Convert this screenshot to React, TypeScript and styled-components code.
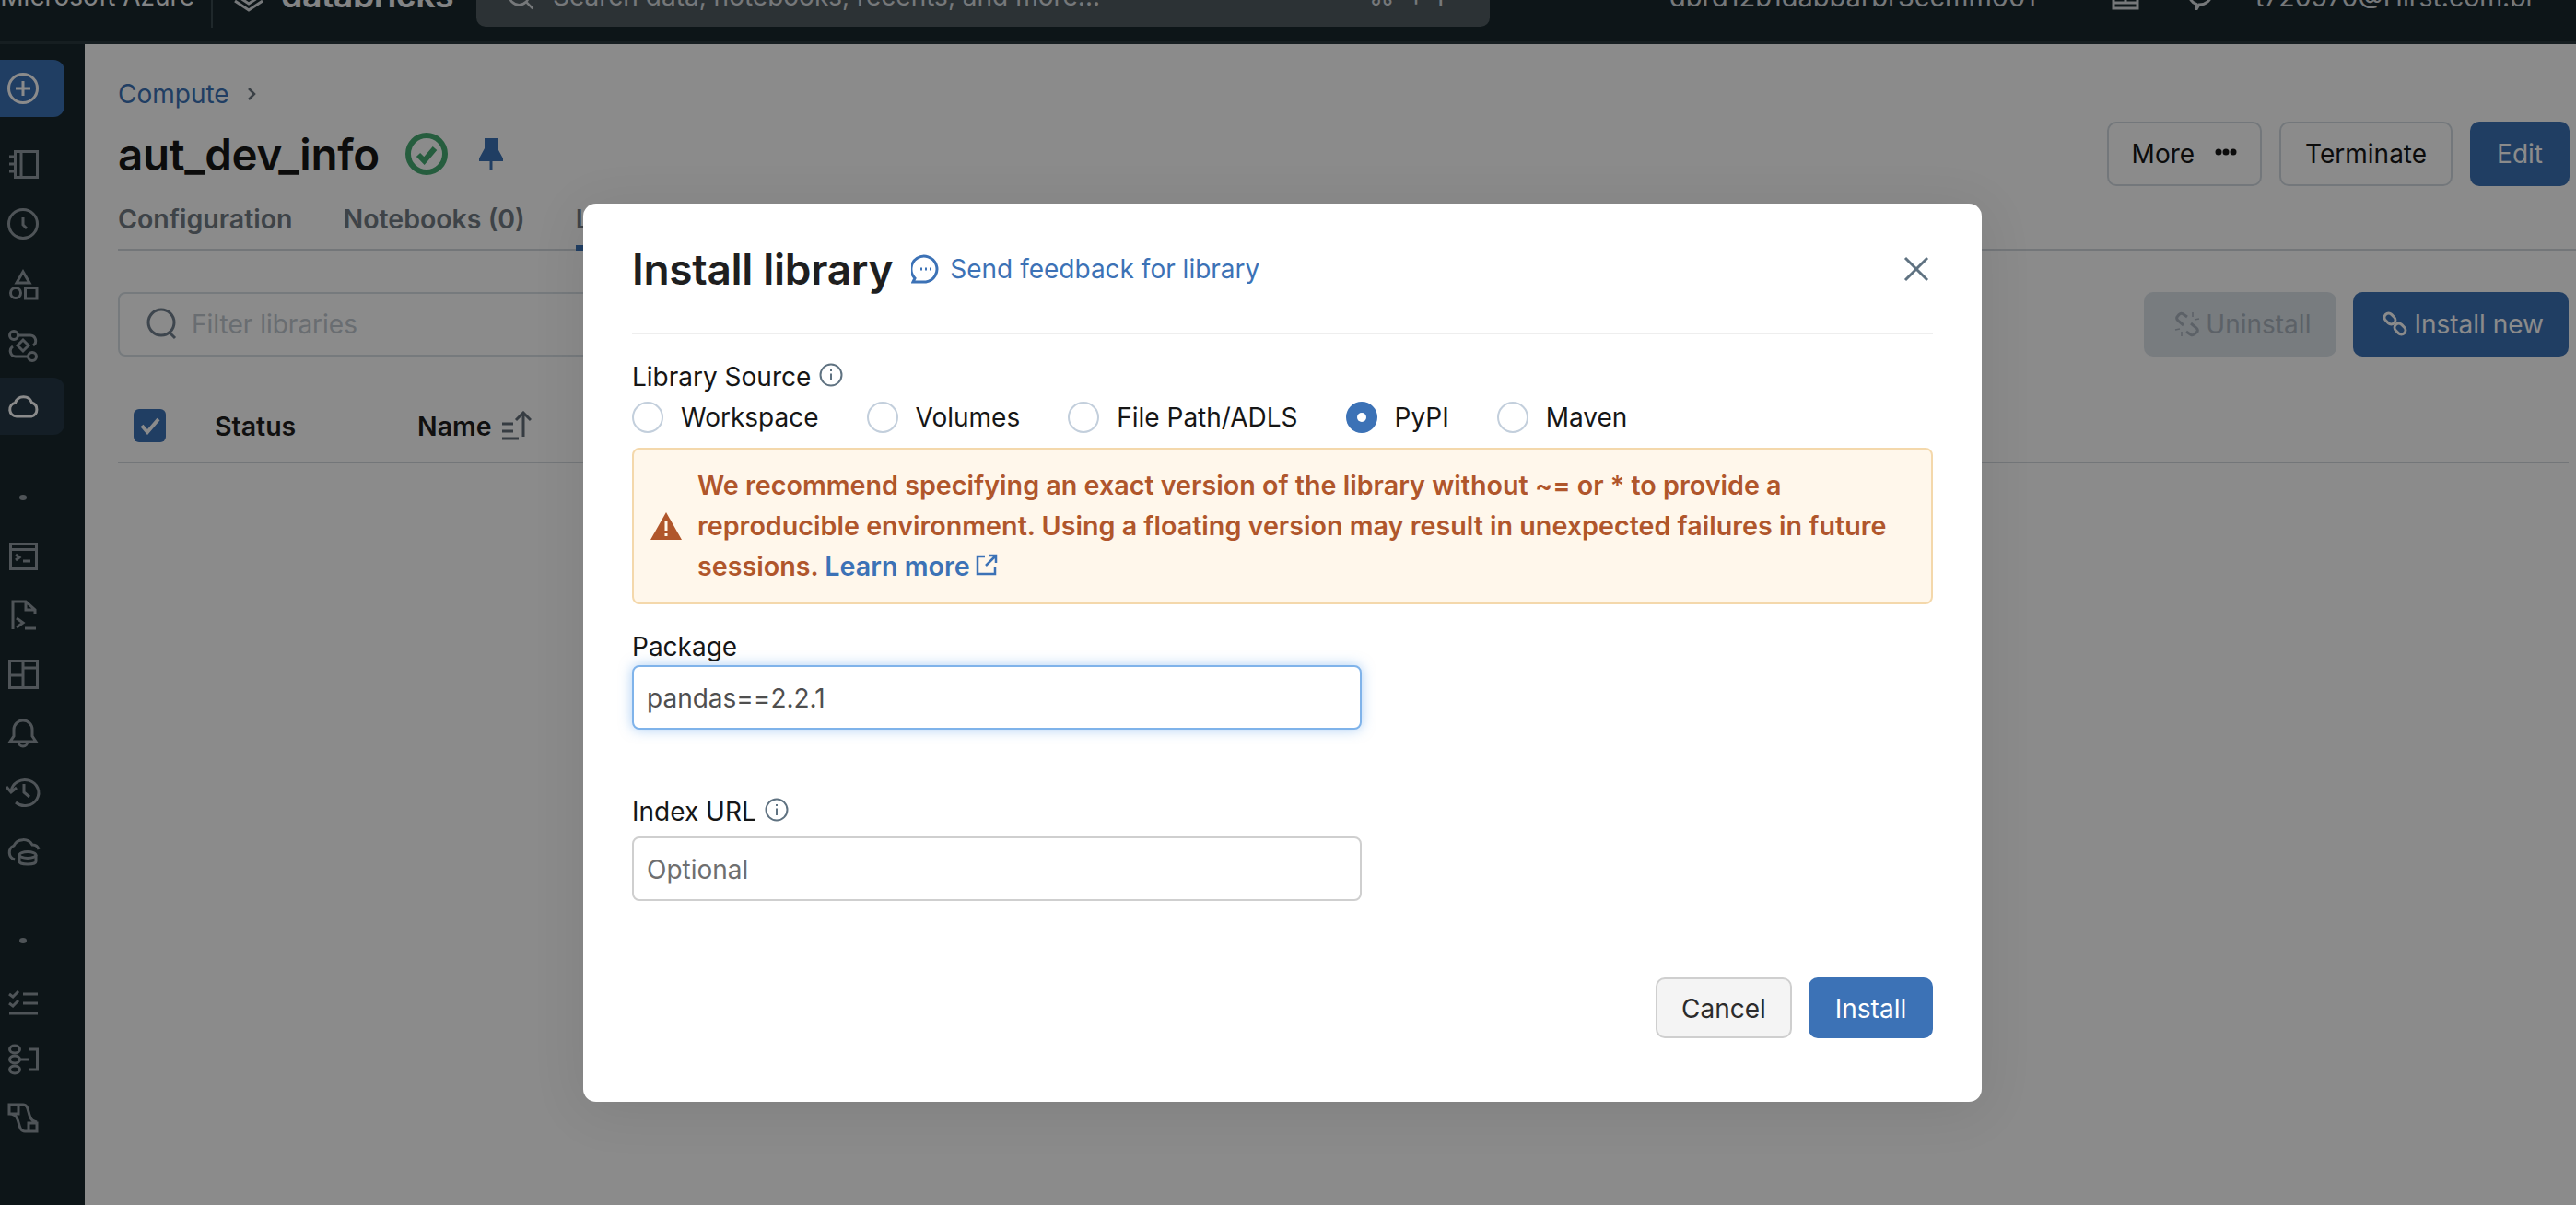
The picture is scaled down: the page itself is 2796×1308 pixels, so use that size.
import React from "react";
import styled, { createGlobalStyle } from "styled-components";

const Global = createGlobalStyle`
  html, body { margin: 0; padding: 0; background: #fff; }
  body { font-family: Inter, "Noto Sans", "Liberation Sans", sans-serif; font-size: 28px; color: #161616; }
  * { box-sizing: border-box; }
`;

const Page = styled.div`
  position: relative;
  width: 2796px;
  height: 1308px;
  overflow: hidden;
  display: flex;
  flex-direction: column;
`;

const TopBar = styled.header`
  height: 48px;
  flex: none;
  background: #18282d;
  border-bottom: 3px solid #2a383d;
  overflow: hidden;
  display: flex;
  align-items: flex-end;
  padding-bottom: 16px;
`;

const TopRow = styled.div`
  height: 58px;
  flex: none;
  width: 2796px;
  display: flex;
  align-items: center;
  color: #f0f2f4;
  white-space: nowrap;
`;

const AzureLabel = styled.div`
  width: 211px;
  flex: none;
  display: flex;
  justify-content: flex-end;
  font-size: 28px;
  padding-bottom: 8px;
`;

const TopDivider = styled.div`
  width: 2px;
  height: 60px;
  margin: 0 22px 0 18px;
  background: #3a4a50;
  flex: none;
`;

const LogoMark = styled.svg`
  width: 34px;
  height: 34px;
  flex: none;
  fill: none;
  stroke: #d8dde0;
  stroke-width: 3;
  margin-bottom: 8px;
`;

const LogoWord = styled.div`
  font-size: 37.5px;
  font-weight: 600;
  letter-spacing: -0.5px;
  margin-left: 18px;
  width: 212px;
  flex: none;
  padding-bottom: 12px;
`;

const TopSearch = styled.div`
  width: 1100px;
  height: 58px;
  flex: none;
  background: #525d62;
  border-radius: 0 0 10px 10px;
  display: flex;
  align-items: center;
  padding: 0 36px 8px 33px;
  gap: 20px;
  color: #d8dde0;
  font-size: 28px;
`;

const TopSearchIcon = styled.svg`
  width: 30px;
  height: 30px;
  flex: none;
  fill: none;
  stroke: #d8dde0;
  stroke-width: 3;
`;

const Shortcut = styled.span`
  margin-left: auto;
  letter-spacing: 3px;
`;

const Workspace = styled.div`
  margin-left: 195px;
  width: 480px;
  flex: none;
  font-size: 29px;
  padding-bottom: 8px;
  color: #d8dde0;
`;

const TopIcon = styled.svg<{ $right: number }>`
  width: 30px;
  height: 30px;
  flex: none;
  fill: none;
  stroke: #d8dde0;
  stroke-width: 3;
  margin-right: ${(p) => p.$right}px;
  margin-bottom: 8px;
`;

const Email = styled.div`
  font-size: 28.4px;
  padding-bottom: 8px;
  color: #d8dde0;
`;

const Body = styled.div`
  flex: 1;
  display: flex;
  min-height: 0;
`;

const Sidebar = styled.nav`
  width: 92px;
  flex: none;
  background: #18282d;
  padding-top: 17px;
  display: flex;
  flex-direction: column;
`;

const NavGroup = styled.div<{ $gap: number; $top: number }>`
  display: flex;
  flex-direction: column;
  gap: ${(p) => p.$gap}px;
  margin-top: ${(p) => p.$top}px;
`;

const NavItem = styled.div<{ $bg?: string }>`
  width: 70px;
  height: 62px;
  padding-left: 8px;
  display: flex;
  align-items: center;
  border-radius: 0 12px 12px 0;
  background: ${(p) => p.$bg || "transparent"};
`;

const NavSvg = styled.svg<{ $bright?: boolean }>`
  width: 34px;
  height: 34px;
  fill: none;
  stroke: ${(p) => (p.$bright ? "#ffffff" : "#929ba1")};
  stroke-width: 3;
  overflow: visible;
`;

const NavDot = styled.div<{ $top: number }>`
  width: 8px;
  height: 6px;
  border-radius: 50%;
  background: #929ba1;
  margin: ${(p) => p.$top}px 0 0 21px;
`;

const Main = styled.main`
  flex: 1;
  min-width: 0;
  padding: 37px 0 0 36px;
  background: #fff;
`;

const Crumb = styled.div`
  height: 34px;
  display: flex;
  align-items: center;
  gap: 18px;
  color: #3c72b6;
  font-size: 28px;
`;

const CrumbChevron = styled.svg`
  width: 12px;
  height: 18px;
  fill: none;
  stroke: #6b7680;
  stroke-width: 2.5;
`;

const HeaderRow = styled.div`
  margin-top: 13px;
  height: 70px;
  padding-right: 7px;
  display: flex;
  align-items: center;
`;

const Title = styled.h1`
  margin: 0;
  font-size: 47.5px;
  font-weight: 600;
  letter-spacing: -0.3px;
  color: #161616;
`;

const StatusIcon = styled.svg`
  width: 46px;
  height: 46px;
  margin-left: 28px;
  flex: none;
`;

const PinIcon = styled.svg`
  width: 28px;
  height: 36px;
  margin-left: 33px;
  flex: none;
`;

const Actions = styled.div`
  margin-left: auto;
  display: flex;
  gap: 19px;
`;

const Btn = styled.div<{ $variant?: "primary" | "outline" | "disabled"; $pad?: string }>`
  height: 70px;
  display: flex;
  align-items: center;
  border-radius: 10px;
  padding: ${(p) => p.$pad || "0 28px"};
  font-size: 28px;
  white-space: nowrap;
  border: ${(p) => (p.$variant === "outline" ? "2px solid #d3dbe2" : "none")};
  background: ${(p) =>
    p.$variant === "primary" ? "#3c72b6" : p.$variant === "disabled" ? "#dce3ea" : "transparent"};
  color: ${(p) =>
    p.$variant === "primary" ? "#fff" : p.$variant === "disabled" ? "#a9b3bd" : "#161616"};
`;

const MoreDots = styled.svg`
  width: 24px;
  height: 10px;
  margin-left: 22px;
  margin-bottom: 4px;
  fill: #161616;
`;

const LinkIcon = styled.svg`
  width: 28px;
  height: 28px;
  margin-right: 6px;
  fill: none;
  stroke-width: 3;
  stroke: currentColor;
`;

const Tabs = styled.div`
  height: 70px;
  display: flex;
  gap: 55px;
  border-bottom: 2px solid #d4d8de;
`;

const Tab = styled.div<{ $active?: boolean }>`
  height: 70px;
  padding-top: 18px;
  line-height: 36px;
  font-size: 28.5px;
  font-weight: 600;
  color: #727c84;
  border-bottom: ${(p) => (p.$active ? "6px solid #3c72b6" : "none")};
`;

const Toolbar = styled.div`
  margin-top: 45px;
  padding-right: 8px;
  display: flex;
  justify-content: space-between;
`;

const Filter = styled.div`
  width: 1200px;
  height: 70px;
  border: 2px solid #d8e0e6;
  border-radius: 8px;
  display: flex;
  align-items: center;
  gap: 14px;
  padding-left: 28px;
  color: #c0c8cf;
  font-size: 28px;
`;

const FilterIcon = styled.svg`
  width: 36px;
  height: 36px;
  fill: none;
  stroke: #73808f;
  stroke-width: 3;
`;

const ToolbarRight = styled.div`
  display: flex;
  gap: 18px;
`;

const TableHead = styled.div`
  margin-top: 36px;
  margin-right: 8px;
  height: 80px;
  border-bottom: 2px solid #d4d8de;
  display: flex;
  align-items: center;
  padding-left: 17px;
  font-size: 28.5px;
  font-weight: 600;
`;

const CheckBox = styled.div`
  width: 35px;
  height: 36px;
  border-radius: 6px;
  background: #3c72b6;
  display: flex;
  align-items: center;
  justify-content: center;
  margin-right: 53px;
`;

const CheckSvg = styled.svg`
  width: 24px;
  height: 20px;
  fill: none;
  stroke: #fff;
  stroke-width: 4;
`;

const HeadCell = styled.div<{ $w?: number }>`
  width: ${(p) => (p.$w ? `${p.$w}px` : "auto")};
  display: flex;
  align-items: center;
  gap: 10px;
  color: #1f1f1f;
`;

const SortIcon = styled.svg`
  width: 33px;
  height: 32px;
  fill: none;
  stroke: #646f7a;
  stroke-width: 3;
`;

const Backdrop = styled.div`
  position: absolute;
  inset: 0;
  background: rgba(0, 0, 0, 0.455);
`;

const Dialog = styled.section`
  position: absolute;
  left: 633px;
  top: 221px;
  width: 1518px;
  height: 975px;
  background: #fff;
  border-radius: 14px;
  padding: 0 53px;
  box-shadow: 0 8px 60px rgba(0, 0, 0, 0.09);
  font-size: 28px;
  color: #161616;
`;

const DialogHead = styled.div`
  height: 142px;
  padding-top: 2px;
  border-bottom: 2px solid #eeeeee;
  display: flex;
  align-items: center;
`;

const DialogTitle = styled.h2`
  margin: 0;
  font-size: 46px;
  font-weight: 600;
  letter-spacing: -0.3px;
  color: #1f1f1f;
`;

const Feedback = styled.div`
  margin-left: 20px;
  display: flex;
  align-items: center;
  gap: 10px;
  color: #3c72b6;
  font-size: 28px;
`;

const BlueIcon = styled.svg`
  width: 32px;
  height: 32px;
  fill: none;
  stroke: #3c72b6;
  stroke-width: 3;
`;

const CloseIcon = styled.svg`
  width: 28px;
  height: 28px;
  margin-left: auto;
  margin-right: 4px;
  fill: none;
  stroke: #5f7281;
  stroke-width: 3;
`;

const Label = styled.div<{ $top: number }>`
  height: 34px;
  margin-top: ${(p) => p.$top}px;
  display: flex;
  align-items: center;
  gap: 9px;
`;

const InfoIcon = styled.svg`
  width: 26px;
  height: 26px;
  fill: none;
  stroke: #5f7281;
  stroke-width: 2;
  margin-bottom: 4px;
`;

const RadioRow = styled.div`
  margin-top: 9px;
  height: 36px;
  display: flex;
  align-items: center;
  gap: 52px;
`;

const RadioOption = styled.label`
  display: flex;
  align-items: center;
  gap: 19px;
`;

const RadioMark = styled.span<{ $on?: boolean }>`
  width: 34px;
  height: 34px;
  border-radius: 50%;
  display: flex;
  align-items: center;
  justify-content: center;
  background: ${(p) => (p.$on ? "#3c72b6" : "#fff")};
  border: ${(p) => (p.$on ? "none" : "2px solid #c3cfdc")};
  &::after {
    content: "";
    width: 10px;
    height: 10px;
    border-radius: 50%;
    background: ${(p) => (p.$on ? "#fff" : "transparent")};
  }
`;

const Alert = styled.div`
  margin-top: 15px;
  height: 170px;
  padding: 0 30px 0 17px;
  background: #fff7eb;
  border: 2px solid #f4d8ab;
  border-radius: 8px;
  display: flex;
  align-items: center;
  gap: 16px;
`;

const WarnIcon = styled.svg`
  width: 36px;
  height: 32px;
  flex: none;
`;

const AlertText = styled.div`
  font-weight: 600;
  line-height: 44px;
  color: #b0562b;
  font-size: 28.7px;
`;

const AlertLink = styled.span`
  color: #3c72b6;
`;

const ExternalIcon = styled.svg`
  width: 24px;
  height: 24px;
  margin-left: 6px;
  vertical-align: 0;
  fill: none;
  stroke: #3c72b6;
  stroke-width: 2.5;
`;

const Field = styled.div<{ $focus?: boolean; $top: number }>`
  margin-top: ${(p) => p.$top}px;
  width: 792px;
  height: 70px;
  padding: 2px 0 0 14px;
  display: flex;
  align-items: center;
  border-radius: 8px;
  background: #fff;
  border: 2px solid ${(p) => (p.$focus ? "#7fb3ea" : "#cfcfcf")};
  box-shadow: ${(p) => (p.$focus ? "0 0 14px rgba(90, 160, 235, 0.5)" : "none")};
  color: ${(p) => (p.$focus ? "#4f4f4f" : "#6f6f6f")};
`;

const Footer = styled.div`
  margin-top: 83px;
  display: flex;
  justify-content: flex-end;
  gap: 18px;
`;

const CancelBtn = styled.div`
  width: 148px;
  height: 66px;
  padding-top: 2px;
  background: #f4f4f4;
  border: 2px solid #cfcfcf;
  border-radius: 10px;
  display: flex;
  align-items: center;
  justify-content: center;
  color: #2c2c2c;
`;

const InstallBtn = styled.div`
  width: 135px;
  height: 66px;
  padding-top: 2px;
  background: #3c72b6;
  border-radius: 10px;
  display: flex;
  align-items: center;
  justify-content: center;
  color: #fff;
`;

const Info = () => (
  <InfoIcon viewBox="0 0 26 26">
    <circle cx="13" cy="13" r="11.5" />
    <path d="M13 11.5V19M13 7v2" />
  </InfoIcon>
);

const Nav = ({ children, bright }: { children: React.ReactNode; bright?: boolean }) => (
  <NavSvg viewBox="0 0 34 34" $bright={bright}>
    {children}
  </NavSvg>
);

export default function App() {
  return (
    <Page>
      <Global />
      <TopBar>
        <TopRow>
          <AzureLabel>Microsoft Azure</AzureLabel>
          <TopDivider />
          <LogoMark viewBox="0 0 34 34">
            <path d="M2 8l15 10 15-10M2 15l15 10 15-10M2 22l15 10 15-10" />
          </LogoMark>
          <LogoWord>databricks</LogoWord>
          <TopSearch>
            <TopSearchIcon viewBox="0 0 36 36">
              <circle cx="16" cy="16" r="13" />
              <path d="M26 26l8 8" />
            </TopSearchIcon>
            <span>Search data, notebooks, recents, and more...</span>
            <Shortcut>⌘ + P</Shortcut>
          </TopSearch>
          <Workspace>dbrd12b1dabbarbr3ccmm001</Workspace>
          <TopIcon viewBox="0 0 30 30" $right={50}>
            <path d="M2 2h26v26H2zM15 2v20M2 22h26" />
          </TopIcon>
          <TopIcon viewBox="0 0 30 30" $right={46}>
            <path d="M15 2a13 11 0 0 1 0 22l-3 5v-5.500A11 11 0 0 1 15 2z" />
          </TopIcon>
          <Email>t720570@Hirst.com.br</Email>
        </TopRow>
      </TopBar>
      <Body>
        <Sidebar>
          <NavItem $bg="#3c72b6">
            <Nav bright>
              <circle cx="17" cy="17" r="15.5" />
              <path d="M17 9v16M9 17h16" />
            </Nav>
          </NavItem>
          <NavGroup $gap={4} $top={19}>
            <NavItem>
              <Nav>
                <path d="M8.500 4.500h24v28h-24zM15 4.500v28M2 10h6M2 18h6M2 26h6" />
              </Nav>
            </NavItem>
            <NavItem>
              <Nav>
                <circle cx="17" cy="17" r="15.5" />
                <path d="M17 10v8l4 4" />
              </Nav>
            </NavItem>
            <NavItem>
              <Nav>
                <path d="M17 3l7 12H10z" />
                <circle cx="9" cy="26" r="5.5" />
                <path d="M19.500 20.500H32V32H19.500z" />
              </Nav>
            </NavItem>
            <NavItem>
              <Nav>
                <circle cx="7" cy="6" r="4.5" />
                <circle cx="27" cy="29" r="4.5" />
                <path d="M11.500 6H25a6 6 0 0 1 3 11M17 11l6 6-6 6-6-6zM22.500 29H9a6 6 0 0 1-3-11" />
              </Nav>
            </NavItem>
            <NavItem $bg="#253746">
              <Nav bright>
                <path d="M10 28a7.500 7.500 0 0 1-1.500-14.800A9.500 9.500 0 0 1 26.500 13a7.800 7.800 0 0 1-.5 15z" />
              </Nav>
            </NavItem>
          </NavGroup>
          <NavDot $top={65} />
          <NavGroup $gap={2} $top={29}>
            <NavItem>
              <Nav>
                <path d="M3.500 4.500h28v27h-28zM3.500 10.500h28M9 16l4 3-4 3M17 23h8" />
              </Nav>
            </NavItem>
            <NavItem>
              <Nav>
                <path d="M6 33V3h14l10 9v5M20 3v9h10M10 21l7 5-7 5M19 32h12" />
              </Nav>
            </NavItem>
            <NavItem>
              <Nav>
                <path d="M2.500 3.500h30v29h-30zM17 3.500v29M2.500 19H17M17 11h15.500" />
              </Nav>
            </NavItem>
            <NavItem>
              <Nav>
                <path d="M3 27h28l-4-6v-7a10 10 0 0 0-20 0v7zM12 27a5 5 0 0 0 10 0" />
              </Nav>
            </NavItem>
            <NavItem>
              <Nav>
                <path d="M4 17A15 14 0 1 1 9 29M-1 12l5 6 6-5M18 9v9l6 5" />
              </Nav>
            </NavItem>
            <NavItem>
              <Nav>
                <path d="M8 27a8 8 0 0 1-1-15A11 10 0 0 1 27 11a7 7 0 0 1 7 5" />
                <ellipse cx="22" cy="22" rx="9" ry="3.500" />
                <path d="M13 22v7c0 4 18 4 18 0v-7" />
              </Nav>
            </NavItem>
          </NavGroup>
          <NavDot $top={64} />
          <NavGroup $gap={1} $top={32}>
            <NavItem>
              <Nav>
                <path d="M2 9l4 3 6-6M2 19l4 3 6-6M17 9h16M17 19h16M2 30h31" />
              </Nav>
            </NavItem>
            <NavItem>
              <Nav>
                <ellipse cx="8" cy="6" rx="5.500" ry="4" />
                <ellipse cx="8" cy="17" rx="5.500" ry="4" />
                <ellipse cx="8" cy="28" rx="5.500" ry="4" />
                <path d="M13 17h11M24 6h8.500v22H24" />
              </Nav>
            </NavItem>
            <NavItem>
              <Nav>
                <path d="M2 3h10v10H2zM12 3h5c6 0 5 8 8 14 1 3 3 4 7 5M23 23h9v9h-9zM23 32h-4c-6 0-6-8-8-13-1-3-3-6-9-6" />
              </Nav>
            </NavItem>
          </NavGroup>
        </Sidebar>
        <Main>
          <Crumb>
            Compute
            <CrumbChevron viewBox="0 0 12 18">
              <path d="M3 3l6 6-6 6" />
            </CrumbChevron>
          </Crumb>
          <HeaderRow>
            <Title>aut_dev_info</Title>
            <StatusIcon viewBox="0 0 46 46">
              <circle cx="23" cy="23" r="20" fill="none" stroke="#46ab72" strokeWidth="6" />
              <path d="M14 24l6.500 6.500L32 17" fill="none" stroke="#46ab72" strokeWidth="6" />
            </StatusIcon>
            <PinIcon viewBox="0 0 28 36">
              <path d="M7 1h14v11l6 11v3H1v-3l6-11z" fill="#3c72b6" />
              <path d="M14 26v10" stroke="#3c72b6" strokeWidth="3" />
            </PinIcon>
            <Actions>
              <Btn $variant="outline" $pad="0 25px">
                More
                <MoreDots viewBox="0 0 24 10">
                  <circle cx="4" cy="5" r="3.500" />
                  <circle cx="12" cy="5" r="3.500" />
                  <circle cx="20" cy="5" r="3.500" />
                </MoreDots>
              </Btn>
              <Btn $variant="outline" $pad="0 26px">
                Terminate
              </Btn>
              <Btn $variant="primary" $pad="0 29px">
                Edit
              </Btn>
            </Actions>
          </HeaderRow>
          <Tabs>
            <Tab>Configuration</Tab>
            <Tab>Notebooks (0)</Tab>
            <Tab $active>Libraries</Tab>
          </Tabs>
          <Toolbar>
            <Filter>
              <FilterIcon viewBox="0 0 36 36">
                <circle cx="17" cy="16" r="14" />
                <path d="M26 27l6 6" />
              </FilterIcon>
              Filter libraries
            </Filter>
            <ToolbarRight>
              <Btn $variant="disabled" $pad="0 28px 0 33px">
                <LinkIcon viewBox="0 0 28 28">
                  <path d="M14 6L9 2.500Q7 1.500 5 3.500L3 6Q2 8 4 10L10 15M13 22l5 3.500q2 1 4-1L25 22q1-2-1-4l-6-5" />
                  <path d="M20 1v5M27 8l-5 1M1 20l5-1M8 27v-5" strokeWidth="1.500" />
                </LinkIcon>
                Uninstall
              </Btn>
              <Btn $variant="primary" $pad="0 27px 0 32px">
                <LinkIcon viewBox="0 0 28 28">
                  <rect x="1.500" y="3.500" width="13" height="9" rx="4.500" transform="rotate(45 8 8)" />
                  <rect x="12.500" y="14.500" width="13" height="9" rx="4.500" transform="rotate(45 19 19)" />
                </LinkIcon>
                Install new
              </Btn>
            </ToolbarRight>
          </Toolbar>
          <TableHead>
            <CheckBox>
              <CheckSvg viewBox="0 0 24 20">
                <path d="M3 10l6 7L21 3" />
              </CheckSvg>
            </CheckBox>
            <HeadCell $w={220}>Status</HeadCell>
            <HeadCell>
              Name
              <SortIcon viewBox="0 0 33 32">
                <path d="M1 14h12M1 22h12M1 30h18M24 28V3M16 10l8-8 8 8" />
              </SortIcon>
            </HeadCell>
          </TableHead>
        </Main>
      </Body>
      <Backdrop />
      <Dialog>
        <DialogHead>
          <DialogTitle>Install library</DialogTitle>
          <Feedback>
            <BlueIcon viewBox="0 0 32 32">
              <path d="M2 30l2-4A14 14 0 1 1 16 30z" />
              <path d="M10 16h2M15 16h2M20 16h2" />
            </BlueIcon>
            Send feedback for library
          </Feedback>
          <CloseIcon viewBox="0 0 28 28">
            <path d="M2 2l24 24M26 2L2 26" />
          </CloseIcon>
        </DialogHead>
        <Label $top={29}>
          Library Source
          <Info />
        </Label>
        <RadioRow>
          <RadioOption>
            <RadioMark />
            Workspace
          </RadioOption>
          <RadioOption>
            <RadioMark />
            Volumes
          </RadioOption>
          <RadioOption>
            <RadioMark />
            File Path/ADLS
          </RadioOption>
          <RadioOption>
            <RadioMark $on />
            PyPI
          </RadioOption>
          <RadioOption>
            <RadioMark />
            Maven
          </RadioOption>
        </RadioRow>
        <Alert>
          <WarnIcon viewBox="0 0 36 32">
            <path d="M18 1l17 30H1z" fill="#b0562b" />
            <path d="M18 11v10M18 24v3" stroke="#fff7eb" strokeWidth="3" />
          </WarnIcon>
          <AlertText>
            We recommend specifying an exact version of the library without ~= or * to provide a
            reproducible environment. Using a floating version may result in unexpected failures in
            future sessions. <AlertLink>Learn more</AlertLink>
            <ExternalIcon viewBox="0 0 24 24">
              <path d="M10 3H2v19h19v-8M14 2h8v8M22 2L11 13" />
            </ExternalIcon>
          </AlertText>
        </Alert>
        <Label $top={29}>Package</Label>
        <Field $focus $top={3}>
          pandas==2.2.1
        </Field>
        <Label $top={72}>
          Index URL
          <Info />
        </Label>
        <Field $top={10}>Optional</Field>
        <Footer>
          <CancelBtn>Cancel</CancelBtn>
          <InstallBtn>Install</InstallBtn>
        </Footer>
      </Dialog>
    </Page>
  );
}
